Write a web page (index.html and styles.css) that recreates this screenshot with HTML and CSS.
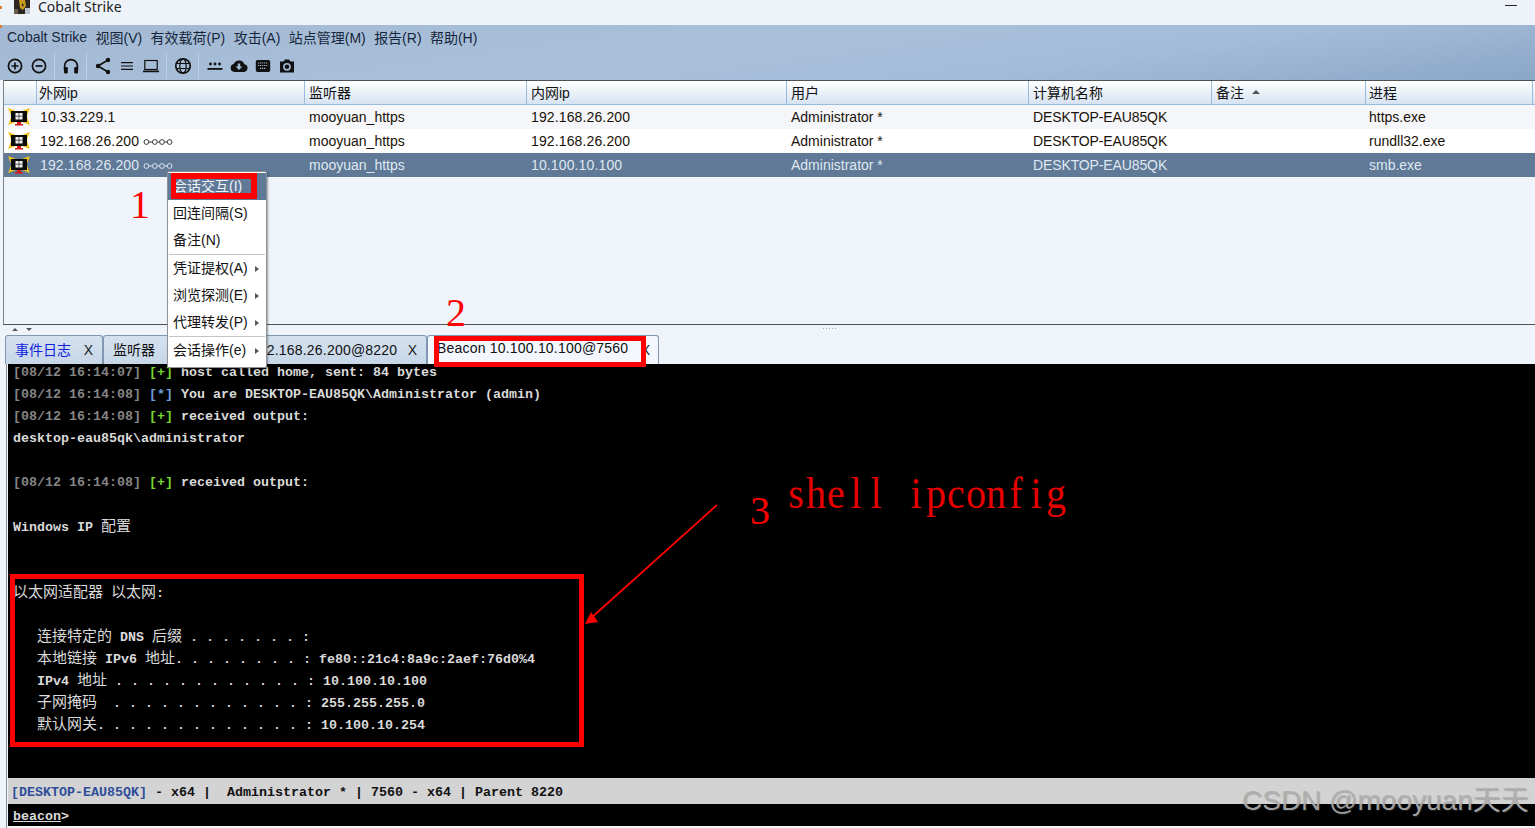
FILE: index.html
```html
<!DOCTYPE html>
<html lang="zh">
<head>
<meta charset="utf-8">
<title>Cobalt Strike</title>
<link rel="stylesheet" href="styles.css">
</head>
<body>
<svg class="defs" width="0" height="0" aria-hidden="true">
  <symbol id="beacon" viewBox="0 0 22 18">
    <path d="M0 0L8 3H3V7.5ZM22 0L14 3H19V7.5ZM0 17L8 14H3V9.5ZM22 17L14 14H19V9.5Z" fill="#f2c21a"/>
    <rect x="3" y="3" width="16" height="11" fill="#0b0b0b"/>
    <rect x="7.5" y="5" width="7" height="6.5" fill="#f4f4f4"/>
    <path d="M11 5V11.5M7.5 8.2H14.5" stroke="#333" stroke-width=".8"/>
    <path d="M9 14H13V16H15V17.4H7V16H9Z" fill="#d81818"/>
  </symbol>
  <symbol id="pivot" viewBox="0 0 30 8">
    <path d="M6 4H9M14.5 4H16.5M21.5 4H24" stroke="currentColor" stroke-width="1"/>
    <g fill="none" stroke="currentColor" stroke-width=".95">
      <circle cx="3.4" cy="4" r="2.4"/><circle cx="11.8" cy="4" r="2.4"/><circle cx="19" cy="4" r="2.4"/><circle cx="26.6" cy="4" r="2.4"/>
    </g>
  </symbol>
</svg>

<div class="app">
  <header class="titlebar">
    <span class="edge-mark edge-a"></span>
    <span class="edge-mark edge-b"></span>
    <svg class="app-icon" width="16" height="14" viewBox="0 0 16 14">
      <rect width="16" height="14" fill="#2b2620"/>
      <path d="M5 0H11L12 6L9 10L6 8Z" fill="#c79a1e"/>
      <path d="M8 3L10 5L8 7Z" fill="#2b2620"/>
      <rect x="11" y="8" width="5" height="6" fill="#b9c4d2"/>
      <rect x="0" y="9" width="4" height="5" fill="#6a5a48"/>
    </svg>
    <span class="title-text">Cobalt Strike</span>
    <span class="spacer"></span>
    <span class="minimize"></span>
  </header>

  <div class="chrome">
    <nav class="menubar">
      <span>Cobalt Strike</span><span>视图(V)</span><span>有效载荷(P)</span><span>攻击(A)</span><span>站点管理(M)</span><span>报告(R)</span><span>帮助(H)</span>
    </nav>
    <div class="toolbar">
      <svg class="tool" viewBox="0 0 20 20"><circle cx="10" cy="10" r="6.6" class="ln"/><path d="M10 6.5V13.5M6.5 10H13.5" class="ln"/></svg>
      <svg class="tool" viewBox="0 0 20 20"><circle cx="10" cy="10" r="6.6" class="ln"/><path d="M6.5 10H13.5" class="ln"/></svg>
      <span class="tool-sep"></span>
      <svg class="tool" viewBox="0 0 20 20"><path d="M3.6 14V10a6.4 6.4 0 0 1 12.8 0V14" class="ln"/><rect x="3" y="11" width="3.8" height="6.4" rx="1.2" class="fl"/><rect x="13.2" y="11" width="3.8" height="6.4" rx="1.2" class="fl"/></svg>
      <span class="tool-sep"></span>
      <svg class="tool" viewBox="0 0 20 20"><path d="M15 4L5 10L15 16" class="ln"/><circle cx="15" cy="4" r="2.2" class="fl"/><circle cx="5" cy="10" r="2.2" class="fl"/><circle cx="15" cy="16" r="2.2" class="fl"/></svg>
      <svg class="tool" viewBox="0 0 20 20"><path d="M4 6.6H16M4 10H16M4 13.4H16" class="ln thin"/></svg>
      <svg class="tool" viewBox="0 0 20 20"><rect x="3.8" y="4.5" width="12.4" height="9" class="ln thin"/><path d="M2 15.4H18" class="ln"/></svg>
      <span class="tool-sep"></span>
      <svg class="tool" viewBox="0 0 20 20"><circle cx="10" cy="10" r="7.2" class="ln"/><ellipse cx="10" cy="10" rx="3.2" ry="7.2" class="ln thin"/><path d="M3 7.5H17M3 12.5H17" class="ln thin"/></svg>
      <span class="tool-sep"></span>
      <svg class="tool" viewBox="0 0 20 20"><circle cx="5.5" cy="8" r="1.4" class="fl"/><circle cx="10" cy="8" r="1.4" class="fl"/><circle cx="14.5" cy="8" r="1.4" class="fl"/><rect x="2.5" y="12" width="15" height="1.8" class="fl"/></svg>
      <svg class="tool" viewBox="0 0 20 20"><path d="M5.5 16A4 4 0 0 1 4.8 8.1 5.6 5.6 0 0 1 15.4 8.3 3.9 3.9 0 0 1 15 16Z" class="fl"/><path d="M8.8 7.5H11.2V10.5H13.4L10 14L6.6 10.5H8.8Z" fill="#a3bbd6"/></svg>
      <svg class="tool" viewBox="0 0 20 20"><rect x="2.8" y="4" width="14.4" height="12" rx="1.8" class="fl"/><path d="M5 7H15M5 9.5H15M7 12.4H13" stroke="#9fb6d0" stroke-width="1.1" stroke-dasharray="1.2 .8" fill="none"/></svg>
      <svg class="tool" viewBox="0 0 20 20"><path d="M3 5.5H6.5L8 3.5H12L13.5 5.5H17V16.5H3Z" class="fl"/><circle cx="10" cy="10.8" r="3.1" fill="none" stroke="#a3bbd6" stroke-width="1.6"/></svg>
    </div>
  </div>

  <section class="table-panel">
    <div class="tr thead">
      <div class="th th-icon"></div><div class="th">外网ip</div><div class="th">监听器</div><div class="th">内网ip</div><div class="th">用户</div><div class="th">计算机名称</div><div class="th">备注<span class="sort"></span></div><div class="th">进程</div><div class="th th-end"></div>
    </div>
    <div class="tr odd">
      <div class="td td-icon"><svg class="beacon-icon"><use href="#beacon"/></svg></div><div class="td num">10.33.229.1</div><div class="td">mooyuan_https</div><div class="td num">192.168.26.200</div><div class="td">Administrator *</div><div class="td host-name">DESKTOP-EAU85QK</div><div class="td"></div><div class="td">https.exe</div><div class="td"></div>
    </div>
    <div class="tr even">
      <div class="td td-icon"><svg class="beacon-icon"><use href="#beacon"/></svg></div><div class="td num">192.168.26.200 <svg class="pivot-icon"><use href="#pivot"/></svg></div><div class="td">mooyuan_https</div><div class="td num">192.168.26.200</div><div class="td">Administrator *</div><div class="td host-name">DESKTOP-EAU85QK</div><div class="td"></div><div class="td">rundll32.exe</div><div class="td"></div>
    </div>
    <div class="tr selected">
      <div class="td td-icon"><svg class="beacon-icon"><use href="#beacon"/></svg></div><div class="td num">192.168.26.200 <svg class="pivot-icon"><use href="#pivot"/></svg></div><div class="td">mooyuan_https</div><div class="td num">10.100.10.100</div><div class="td">Administrator *</div><div class="td host-name">DESKTOP-EAU85QK</div><div class="td"></div><div class="td">smb.exe</div><div class="td"></div>
    </div>
  </section>

  <div class="splitter">
    <span class="tri-up"></span><span class="tri-down"></span>
    <span class="grip"></span>
  </div>

  <div class="tabs">
    <div class="tab tab-log"><span class="tab-label blue">事件日志</span><span class="tab-x">X</span></div>
    <div class="tab tab-listen"><span class="tab-label">监听器</span><span class="tab-x">X</span></div>
    <div class="tab tab-b1"><span class="tab-label wide">Beacon 192.168.26.200@8220</span><span class="tab-x">X</span></div>
    <div class="tab tab-b2"><span class="tab-label wide up">Beacon 10.100.10.100@7560</span><span class="tab-x">X</span></div>
  </div>

  <div class="lower">
    <main class="console">
      <div class="ln-c"><span class="ts">[08/12 16:14:07]</span> <span class="ok">[+]</span> host called home, sent: 84 bytes</div>
      <div class="ln-c"><span class="ts">[08/12 16:14:08]</span> <span class="inf">[*]</span> You are DESKTOP-EAU85QK\Administrator (admin)</div>
      <div class="ln-c"><span class="ts">[08/12 16:14:08]</span> <span class="ok">[+]</span> received output:</div>
      <div class="ln-c">desktop-eau85qk\administrator</div>
      <div class="ln-c"></div>
      <div class="ln-c"><span class="ts">[08/12 16:14:08]</span> <span class="ok">[+]</span> received output:</div>
      <div class="ln-c"></div>
      <div class="ln-c cjk-line">Windows IP <span class="cjk">配置</span></div>
      <div class="ln-c"></div>
      <div class="ln-c"></div>
      <div class="ln-c cjk-line"><span class="cjk">以太网适配器</span> <span class="cjk">以太网</span>:</div>
      <div class="ln-c"></div>
      <div class="ln-c cjk-line">   <span class="cjk">连接特定的</span> DNS <span class="cjk">后缀</span> . . . . . . . :</div>
      <div class="ln-c cjk-line">   <span class="cjk">本地链接</span> IPv6 <span class="cjk">地址</span>. . . . . . . . : fe80::21c4:8a9c:2aef:76d0%4</div>
      <div class="ln-c cjk-line">   IPv4 <span class="cjk">地址</span> . . . . . . . . . . . . : 10.100.10.100</div>
      <div class="ln-c cjk-line">   <span class="cjk">子网掩码</span>  . . . . . . . . . . . . : 255.255.255.0</div>
      <div class="ln-c cjk-line">   <span class="cjk">默认网关</span>. . . . . . . . . . . . . : 10.100.10.254</div>
    </main>
    <div class="status"><span class="host">[DESKTOP-EAU85QK]</span> - x64 <b>|</b>  Administrator * <b>|</b> 7560 - x64 <b>|</b> Parent 8220</div>
    <div class="prompt"><u>beacon</u>&gt;</div>
  </div>

  <div class="context-menu">
    <div class="mi active">会话交互(I)</div>
    <div class="mi">回连间隔(S)</div>
    <div class="mi">备注(N)</div>
    <div class="msep"></div>
    <div class="mi sub">凭证提权(A)</div>
    <div class="mi sub">浏览探测(E)</div>
    <div class="mi sub">代理转发(P)</div>
    <div class="msep"></div>
    <div class="mi sub">会话操作(e)</div>
  </div>

  <div class="mark mark-menu"></div>
  <div class="mark mark-tab"></div>
  <div class="mark mark-ip"></div>
  <span class="note note-1">1</span>
  <span class="note note-2">2</span>
  <span class="note note-3">3</span>
  <span class="note-cmd"><i>s</i><i>h</i><i>e</i><i>l</i><i>l</i><i> </i><i>i</i><i>p</i><i>c</i><i>o</i><i>n</i><i>f</i><i>i</i><i>g</i></span>
  <svg class="arrow" width="140" height="130" viewBox="580 500 140 130">
    <path d="M717 505L590 619" stroke="#f00" stroke-width="1.8" fill="none"/>
    <path d="M585 624L591 612L598 622Z" fill="#f00"/>
  </svg>
  <div class="watermark">CSDN @mooyuan天天</div>
</div>
</body>
</html>
```

FILE: styles.css
```css
* { box-sizing: border-box; }
html, body { margin: 0; padding: 0; background: #eff4fb; }
body {
  font-family: "Liberation Sans", "Noto Sans CJK SC", sans-serif;
  font-size: 14px;
  color: #111;
  overflow: hidden;
}
.defs { position: absolute; }
.app {
  position: relative;
  width: 1535px;
  height: 828px;
  overflow: hidden;
  display: flex;
  flex-direction: column;
}

/* title bar */
.titlebar {
  height: 25px;
  flex: none;
  display: flex;
  align-items: flex-start;
  background: #eef3fa;
  padding-left: 14px;
}
.edge-mark { position: absolute; left: 0; width: 2px; height: 3px; background: #e2792e; }
.edge-a { top: 6px; }
.edge-b { top: 25px; }
.app-icon { flex: none; }
.title-text {
  margin-left: 8px;
  margin-top: -1px;
  font-family: "Noto Sans", sans-serif;
  font-size: 14px;
  line-height: 16px;
  color: #222;
}
.spacer { flex: 1; }
.minimize { width: 12px; height: 1px; background: #222; margin: 5px 18px 0 0; }

/* menu and toolbar */
.chrome {
  height: 55px;
  flex: none;
  background: linear-gradient(172deg, #a3b9d3 0%, #a9c0da 45%, #a3bcd8 70%, #8ba7c6 100%);
}
.menubar {
  height: 25px;
  display: flex;
  align-items: center;
  gap: 8.4px;
  padding: 0 0 2px 7px;
  color: #16263a;
  white-space: nowrap;
}
.toolbar {
  height: 30px;
  display: flex;
  align-items: center;
  padding: 2px 0 0 5px;
}
.tool { width: 20px; height: 20px; margin: 0 2px; flex: none; }
.toolbar .tool:first-child { margin-left: 0; }
.ln { fill: none; stroke: #111; stroke-width: 1.7; }
.thin { stroke-width: 1.2; }
.fl { fill: #111; }
.tool-sep { width: 8px; height: 26px; flex: none; position: relative; }
.tool-sep::before {
  content: "";
  position: absolute;
  left: 3px;
  top: 0;
  bottom: 0;
  width: 1px;
  background: #bdd0e4;
}

/* session table */
.table-panel {
  height: 245px;
  flex: none;
  background: #eff4fb;
  border-top: 1px solid #505355;
  border-bottom: 1px solid #505355;
  margin-left: 3px;
  border-left: 1px solid #7c8388;
}
.tr {
  display: grid;
  grid-template-columns: 32px 268px 222px 260px 242px 183px 154px 167px 3px;
  height: 24px;
  align-items: center;
}
.thead {
  background: linear-gradient(#ffffff, #d6e3f2);
  border-bottom: 1px solid #9bbbdc;
  height: 24px;
}
.th {
  height: 100%;
  display: flex;
  align-items: center;
  padding: 0 0 1px 4px;
  border-left: 1px solid #9bbbdc;
  color: #111;
}
.th:nth-child(2) { padding-left: 2px; }
.th:nth-child(8) { padding-left: 3px; }
.th-icon { border-left: none; }
.th-end { padding: 0; }
.sort {
  width: 0;
  height: 0;
  margin-left: 8px;
  border-left: 4px solid transparent;
  border-right: 4px solid transparent;
  border-bottom: 4px solid #555;
}
.td {
  padding-left: 5px;
  white-space: nowrap;
  line-height: 24px;
  height: 24px;
  color: #1a1208;
}
.td:nth-child(2) { padding-left: 4px; }
.td:nth-child(8) { padding-left: 4px; }
.num { letter-spacing: .13px; }
.host-name { letter-spacing: -.12px; }
.td-icon { padding: 3px 0 0 4px; }
.odd { background: #f5f6fa; }
.even { background: #fff; }
.selected { background: #5f7997; }
.selected .td { color: #dfe8f2; }
.beacon-icon { width: 22px; height: 18px; display: block; }
.pivot-icon { width: 30px; height: 8px; vertical-align: 0; color: #333; letter-spacing: 0; }
.selected .pivot-icon { color: #dfe8f2; }

/* splitter */
.splitter {
  height: 10px;
  flex: none;
  position: relative;
  display: flex;
  gap: 8px;
  padding: 3px 0 0 12px;
}
.tri-up, .tri-down { width: 0; height: 0; border-left: 3px solid transparent; border-right: 3px solid transparent; }
.tri-up { border-bottom: 3px solid #555; }
.tri-down { border-top: 3px solid #555; }
.grip {
  position: absolute;
  left: 822px;
  top: 2px;
  width: 16px;
  height: 3px;
  background: radial-gradient(circle, #aab 0.5px, transparent 0.7px) 0 0 / 3px 3px;
}

/* tabs */
.tabs {
  height: 29px;
  flex: none;
  display: flex;
  padding-left: 5px;
  align-items: flex-start;
}
.tab {
  height: 29px;
  display: flex;
  align-items: center;
  justify-content: space-between;
  background: linear-gradient(#d4e1ef, #c7d7e8);
  border: 1px solid #7f97b0;
  border-bottom: none;
  border-radius: 3px 3px 0 0;
  padding: 0 9px 0 9px;
  white-space: nowrap;
}
.tab-log { width: 98px; }
.tab-listen { width: 85px; }
.tab-b1 { width: 239px; }
.tab-b2 { width: 232px; padding-right: 8px; background: #f3f7fd; }
.tab-label { color: #111; position: relative; top: -1px; }
.tab-label.wide { letter-spacing: .2px; top: 0; }
.tab-label.up { top: -2px; }
.blue { color: #0f1ee0; }
.tab-x { color: #222; font-size: 14px; }

/* console */
.lower {
  flex: 1;
  min-height: 0;
  display: flex;
  flex-direction: column;
  margin-left: 6px;
  border-left: 1px solid #8b8f94;
  padding-left: 1px;
  padding-bottom: 2px;
}
.console {
  height: 414px;
  flex: none;
  background: #000;
  color: #dadada;
  font-family: "Liberation Mono", "Noto Sans CJK SC", monospace;
  font-size: 13.33px;
  font-weight: 700;
  padding-left: 5px;
  overflow: hidden;
}
.ln-c {
  height: 22px;
  line-height: 22px;
  white-space: pre;
  position: relative;
  top: -2px;
}
.cjk-line { top: -1px; }
.cjk { font-family: "Noto Sans CJK SC", sans-serif; font-size: 15px; font-weight: 400; line-height: 0; }
.ts { color: #858585; }
.ok { color: #74d62c; }
.inf { color: #6f9fd8; }
.status {
  height: 26px;
  flex: none;
  background: #d3d3d3;
  color: #111;
  font-family: "Liberation Mono", monospace;
  font-size: 13.33px;
  font-weight: 700;
  line-height: 29px;
  padding-left: 3px;
  white-space: pre;
}
.host { color: #2f4f9a; }
.prompt {
  height: 22px;
  flex: none;
  background: #000;
  color: #dadada;
  font-family: "Liberation Mono", monospace;
  font-size: 13.33px;
  font-weight: 700;
  line-height: 25px;
  padding-left: 5px;
}

/* context menu */
.context-menu {
  position: absolute;
  left: 167px;
  top: 171px;
  width: 100px;
  height: 197px;
  background: #fff;
  border: 1px solid #8e9296;
  border-radius: 2px;
  padding-top: 1px;
  box-shadow: 1px 1px 2px rgba(0,0,0,.35);
}
.mi {
  height: 27px;
  line-height: 27px;
  padding-left: 5px;
  color: #111;
  position: relative;
  white-space: nowrap;
}
.mi.active { background: #5f7997; color: #eef3f8; }
.msep { height: 1px; background: #c3c6c9; margin: 0 1px; }
.sub::after {
  content: "";
  position: absolute;
  right: 7px;
  top: 11px;
  border-left: 4px solid #555;
  border-top: 3px solid transparent;
  border-bottom: 3px solid transparent;
}

/* hand-drawn annotations */
.mark { position: absolute; border: 5px solid #f00; }
.mark-menu { left: 171px; top: 173px; width: 86px; height: 26px; border-width: 6px 6px 6px 5px; }
.mark-tab { left: 434px; top: 336px; width: 212px; height: 31px; border-width: 5px; }
.mark-ip { left: 10px; top: 574px; width: 574px; height: 173px; }
.note {
  position: absolute;
  font-family: "Liberation Serif", serif;
  font-size: 40px;
  line-height: 40px;
  color: #f00;
}
.note-1 { left: 130px; top: 185px; }
.note-2 { left: 446px; top: 293px; }
.note-3 { left: 750px; top: 491px; }
.note-cmd {
  position: absolute;
  left: 786px;
  top: 472px;
  display: flex;
  font-family: "Liberation Serif", serif;
  font-size: 40px;
  line-height: 40px;
  color: #e60000;
  transform: scaleY(1.1);
  transform-origin: left top;
}
.note-cmd i { font-style: normal; width: 20px; text-align: center; white-space: pre; }
.arrow { position: absolute; left: 580px; top: 500px; }
.watermark {
  position: absolute;
  left: 1242px;
  top: 785px;
  font-size: 28px;
  line-height: 32px;
  color: rgba(175,175,175,.92);
  text-shadow: 1px 1px 1px rgba(90,90,90,.35);
  white-space: nowrap;
}
```
